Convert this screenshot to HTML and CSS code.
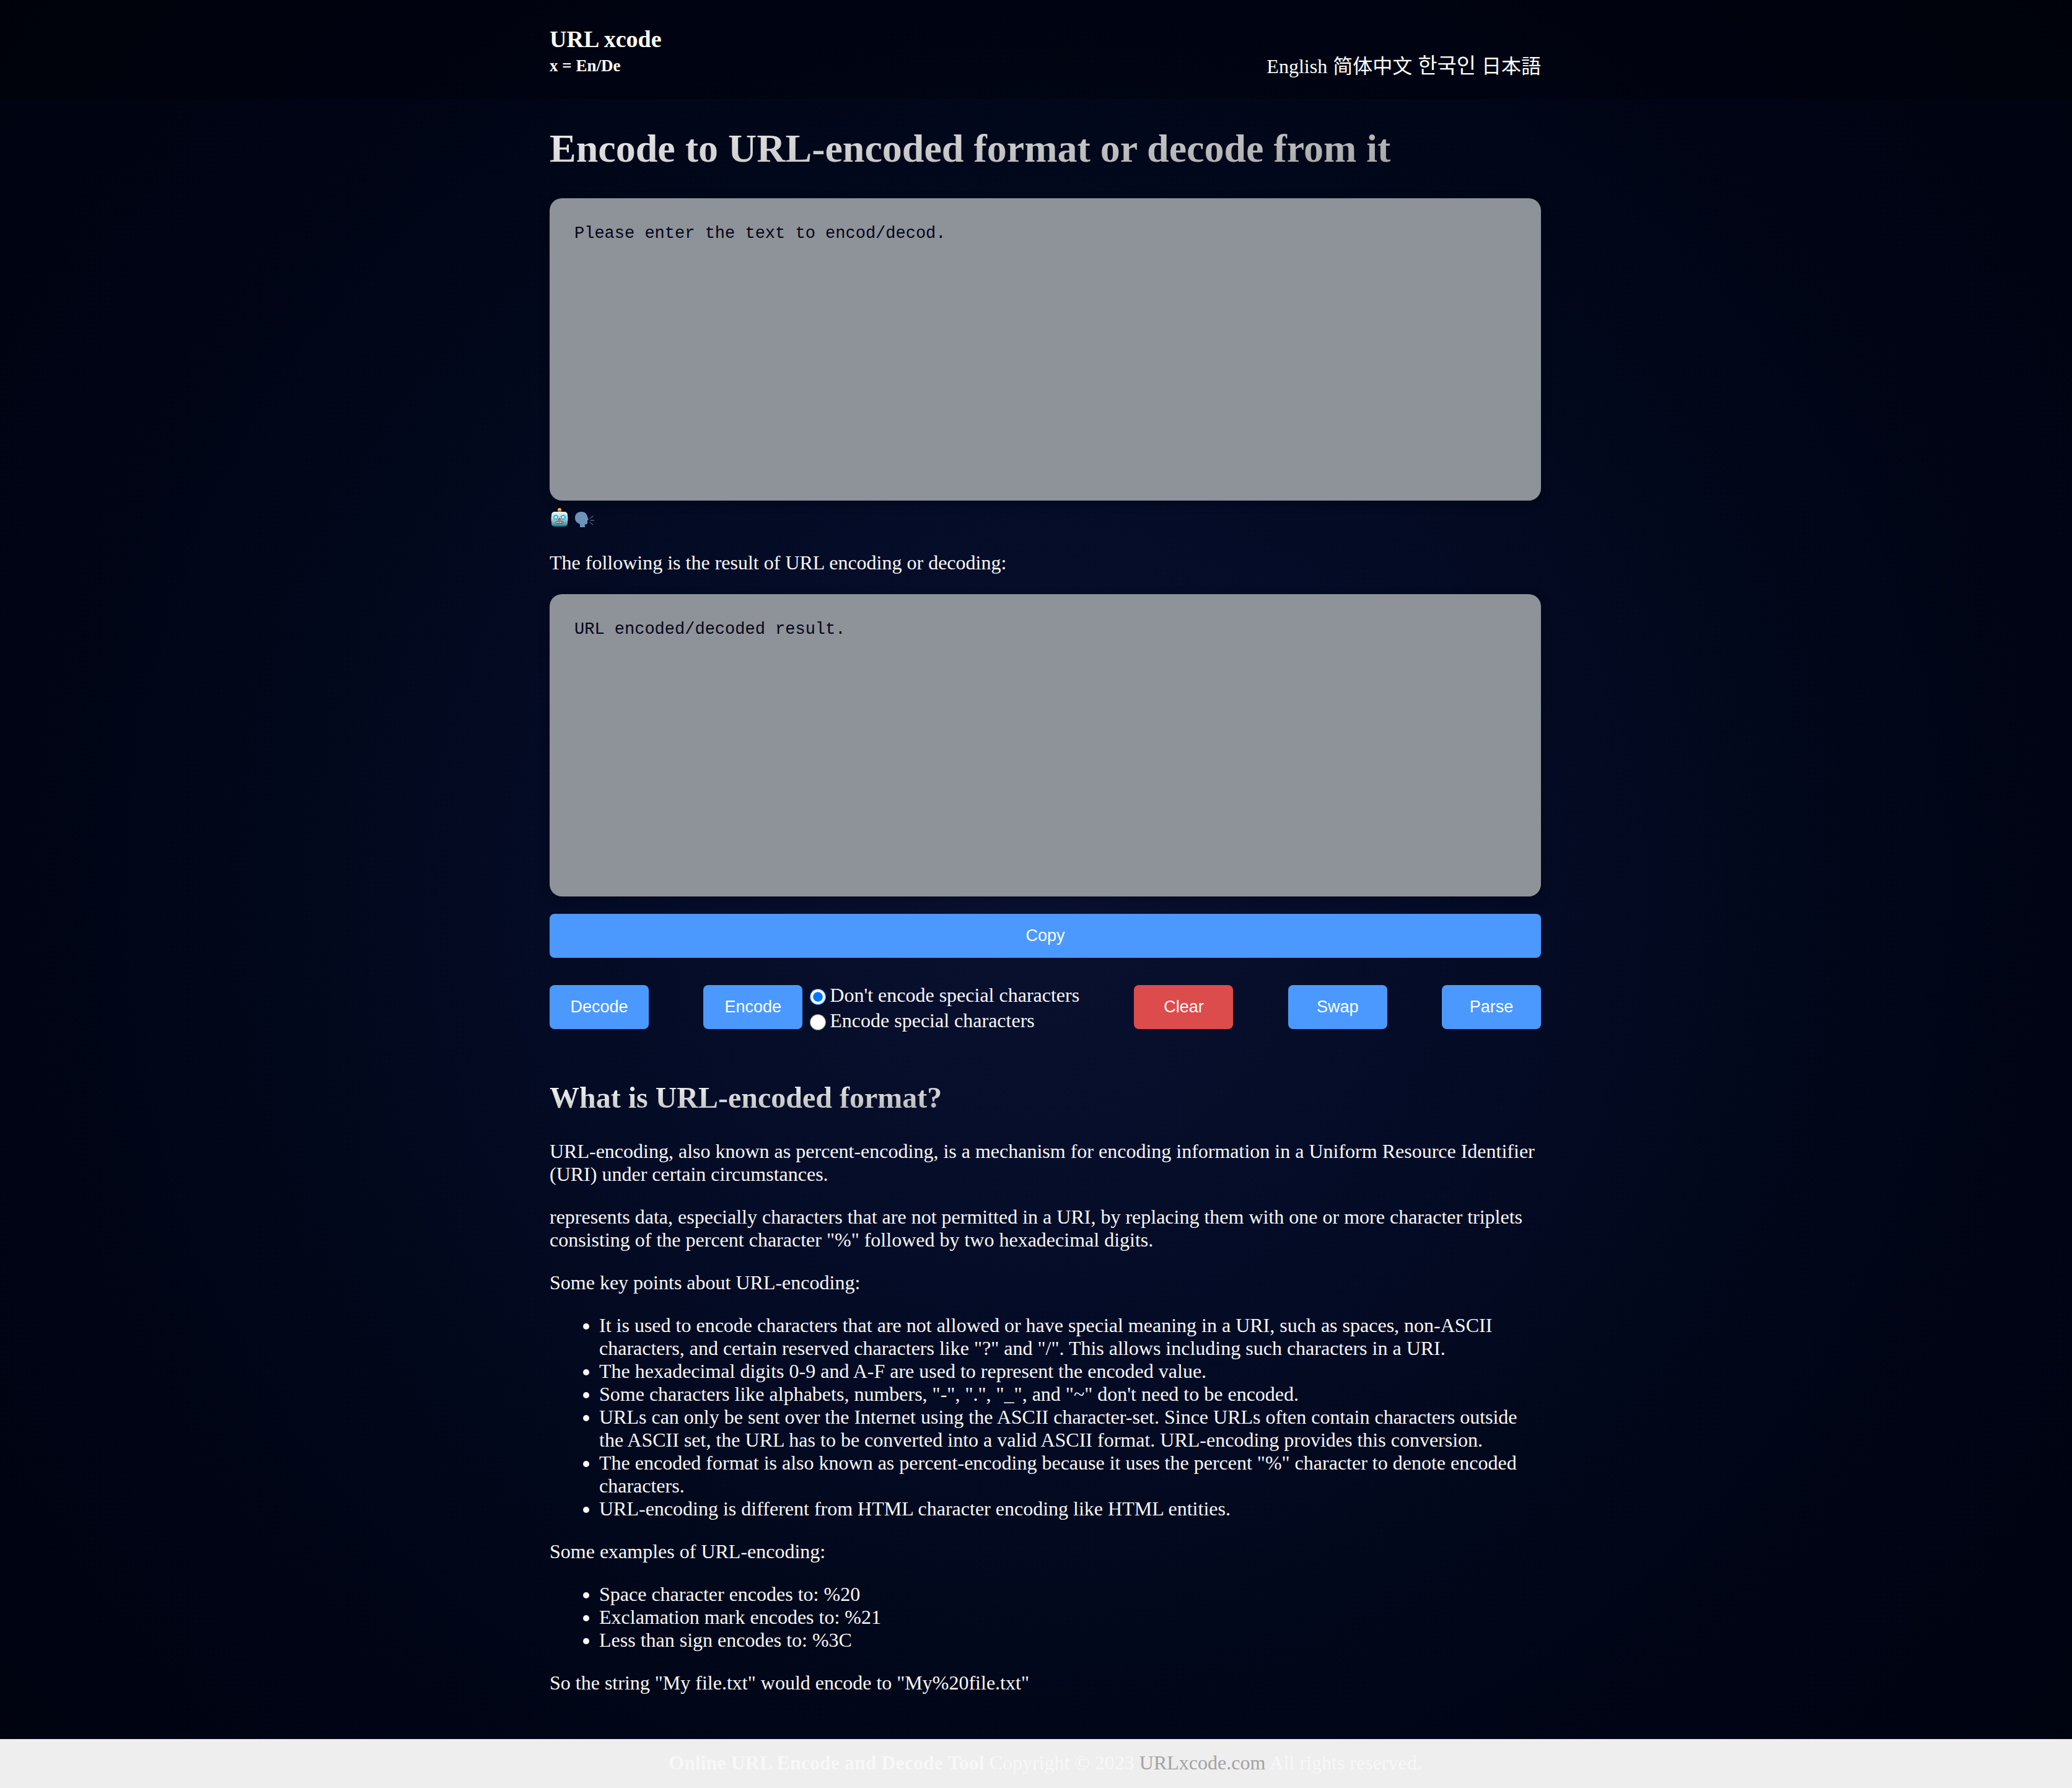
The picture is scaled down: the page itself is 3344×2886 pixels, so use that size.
FILE: index.html
```
<!DOCTYPE html>
<html lang="en">
<head>
<meta charset="utf-8">
<title>URL xcode</title>
<link rel="stylesheet" href="styles.css">
</head>
<body>
<header class="site-header">
  <div class="container header-row">
    <div class="brand">
      <h3 class="brand-name">URL xcode</h3>
      <h5 class="brand-note">x = En/De</h5>
    </div>
    <nav class="languages">
      <a href="#en">English</a>
      <a href="#zh" lang="zh-CN">简体中文</a>
      <a href="#ko" lang="ko">한국인</a>
      <a href="#ja" lang="ja">日本語</a>
    </nav>
  </div>
</header>

<main class="container">
  <h1 class="title">Encode to URL-encoded format or decode from it</h1>
  <textarea class="text-area" aria-label="Text to encode or decode" placeholder="Please enter the text to encod/decod."></textarea>
  <div class="emoji-row">
    <svg class="emoji" viewBox="0 0 32 32" role="img" aria-label="Robot">
      <defs>
        <linearGradient id="face" x1="0" y1="0" x2="0" y2="1">
          <stop offset="0" stop-color="#eef4f6"/>
          <stop offset="0.45" stop-color="#b4d3da"/>
          <stop offset="1" stop-color="#1c8798"/>
        </linearGradient>
      </defs>
      <rect x="2" y="13" width="28" height="9" rx="2" fill="#d8382c"/>
      <circle cx="16" cy="3" r="3" fill="#f8b93c"/>
      <rect x="13" y="4" width="6" height="3" fill="#a2543c"/>
      <rect x="3" y="6" width="26" height="24" rx="5" fill="url(#face)"/>
      <path d="M5 27q1 2 4 2h14q3 0 4-2" fill="none" stroke="#0f5c6c" stroke-width="1"/>
      <circle cx="10" cy="15" r="3" fill="#fff" stroke="#1fb9d4" stroke-width="2"/>
      <circle cx="22" cy="15" r="3" fill="#fff" stroke="#1fb9d4" stroke-width="2"/>
      <path d="M16 15l3 5h-6z" fill="#e0483c"/>
      <rect x="10" y="21" width="12" height="4" rx="1" fill="#3a4a52"/>
      <path d="M11 23h10" stroke="#fff" stroke-width="2" stroke-dasharray="2 1"/>
    </svg>
    <svg class="emoji" viewBox="0 0 32 32" role="img" aria-label="Speaking head">
      <path d="M1 16C1 9 6 6 11 6c6 0 9 3 10 8l2 5-2 1 0 4c0 2-2 3-4 2l0 5H9l0-5C4 24 1 21 1 16z" fill="#6c93b8"/>
      <path d="M25 17l5-4M26 20h6M25 23l5 4" stroke="#6c93b8" stroke-width="1" stroke-linecap="round"/>
    </svg>
  </div>
  <p>The following is the result of URL encoding or decoding:</p>
  <textarea class="text-area" aria-label="Result" placeholder="URL encoded/decoded result."></textarea>
  <button class="button copy" type="button">Copy</button>

  <div class="actions">
    <button class="button" type="button">Decode</button>
    <div class="encode-group">
      <button class="button" type="button">Encode</button>
      <div class="options">
        <label class="option"><input type="radio" name="mode" checked>Don't encode special characters</label>
        <label class="option"><input type="radio" name="mode">Encode special characters</label>
      </div>
    </div>
    <button class="button danger" type="button">Clear</button>
    <button class="button" type="button">Swap</button>
    <button class="button" type="button">Parse</button>
  </div>

  <article>
    <h2 class="subtitle">What is URL-encoded format?</h2>
    <p>URL-encoding, also known as percent-encoding, is a mechanism for encoding information in a Uniform Resource Identifier (URI) under certain circumstances.</p>
    <p>represents data, especially characters that are not permitted in a URI, by replacing them with one or more character triplets consisting of the percent character "%" followed by two hexadecimal digits.</p>
    <p>Some key points about URL-encoding:</p>
    <ul>
      <li>It is used to encode characters that are not allowed or have special meaning in a URI, such as spaces, non-ASCII characters, and certain reserved characters like "?" and "/". This allows including such characters in a URI.</li>
      <li>The hexadecimal digits 0-9 and A-F are used to represent the encoded value.</li>
      <li>Some characters like alphabets, numbers, "-", ".", "_", and "~" don't need to be encoded.</li>
      <li>URLs can only be sent over the Internet using the ASCII character-set. Since URLs often contain characters outside the ASCII set, the URL has to be converted into a valid ASCII format. URL-encoding provides this conversion.</li>
      <li>The encoded format is also known as percent-encoding because it uses the percent "%" character to denote encoded characters.</li>
      <li>URL-encoding is different from HTML character encoding like HTML entities.</li>
    </ul>
    <p>Some examples of URL-encoding:</p>
    <ul>
      <li>Space character encodes to: %20</li>
      <li>Exclamation mark encodes to: %21</li>
      <li>Less than sign encodes to: %3C</li>
    </ul>
    <p>So the string "My file.txt" would encode to "My%20file.txt"</p>
  </article>
</main>

<footer class="site-footer">
  <strong>Online URL Encode and Decode Tool</strong> Copyright © 2023 <a href="#home">URLxcode.com</a> All rights reserved.
</footer>
</body>
</html>
```
FILE: styles.css
```
* {
  box-sizing: border-box;
}

body {
  margin: 0;
  min-height: 100vh;
  color: #f8f8f8;
  background: #00030f radial-gradient(circle at center, #091130 0%, #040b25 35%, #02081b 55%, #000415 75%, #00030f 100%);
  font-family: "Liberation Serif", "Noto Sans CJK SC", serif;
  font-size: 32px;
  line-height: 37px;
}

.container {
  width: 1600px;
  max-width: 100%;
  margin: 0 auto;
}

.site-header,
main,
.site-footer {
  border-left: 30px solid transparent;
}

.site-header {
  padding: 40px 0 34px;
  background: rgba(0, 0, 0, 0.25);
}

main.container {
  width: 1630px;
}

.header-row {
  display: flex;
  justify-content: space-between;
  align-items: flex-end;
}

.brand-name,
.brand-note {
  margin: 0;
  color: #fff;
}

.brand-name {
  font-size: 38px;
  line-height: 46px;
}

.brand-note {
  font-size: 27px;
  line-height: 40px;
}

.languages {
  display: flex;
  align-items: baseline;
  gap: 9px;
}

.languages a {
  color: #fff;
  text-decoration: none;
}

:lang(ko) {
  font-family: "Liberation Serif", "Noto Sans CJK KR", serif;
  font-size: 34px;
}

:lang(ja) {
  font-family: "Liberation Serif", "Noto Sans CJK JP", serif;
}

.title,
.subtitle {
  color: transparent;
  background: linear-gradient(to bottom right, #fff, #888);
  background-clip: text;
  -webkit-background-clip: text;
}

.title {
  margin: 0;
  padding: 43px 0;
  font-size: 64px;
  line-height: 74px;
}

.subtitle {
  margin: 80px 0 40px;
  font-size: 48px;
  line-height: 56px;
}

.text-area {
  display: block;
  width: 100%;
  height: 488px;
  padding: 42px 40px;
  border: 0;
  border-radius: 20px;
  background: #8e9299;
  box-shadow: 0 4px 16px rgba(0, 0, 0, 0.3);
  font-family: "Liberation Mono", monospace;
  font-size: 27px;
  line-height: 30px;
  color: #02061a;
  resize: none;
}

.text-area::placeholder {
  color: #02061a;
}

.emoji-row {
  display: flex;
  gap: 8px;
  height: 50px;
  padding: 12px 0;
}

.emoji {
  width: 32px;
  height: 32px;
}

p {
  margin: 32px 0;
}

ul {
  margin: 32px 0;
  padding-left: 80px;
}

.button {
  width: 160px;
  height: 71px;
  padding: 0;
  border: 0;
  border-radius: 8px;
  background: #4b99ff;
  color: #fff;
  font-family: "Liberation Sans", sans-serif;
  font-size: 27px;
}

.copy {
  display: block;
  width: 100%;
  margin: 28px 0 44px;
}

.danger {
  background: #dc4c4c;
}

.actions {
  display: flex;
  justify-content: space-between;
}

.encode-group {
  display: flex;
  gap: 12px;
}

.options {
  display: flex;
  flex-direction: column;
  gap: 8px;
  line-height: 33px;
}

.option {
  display: flex;
  align-items: center;
  gap: 6px;
}

.option input {
  width: 26px;
  height: 26px;
  margin: 4px 0 0;
}

.site-footer {
  margin-top: 72px;
  padding: 20px 0 22px;
  background: #eee;
  text-align: center;
}

.site-footer a {
  color: #a3a3a3;
  text-decoration: none;
}
```
